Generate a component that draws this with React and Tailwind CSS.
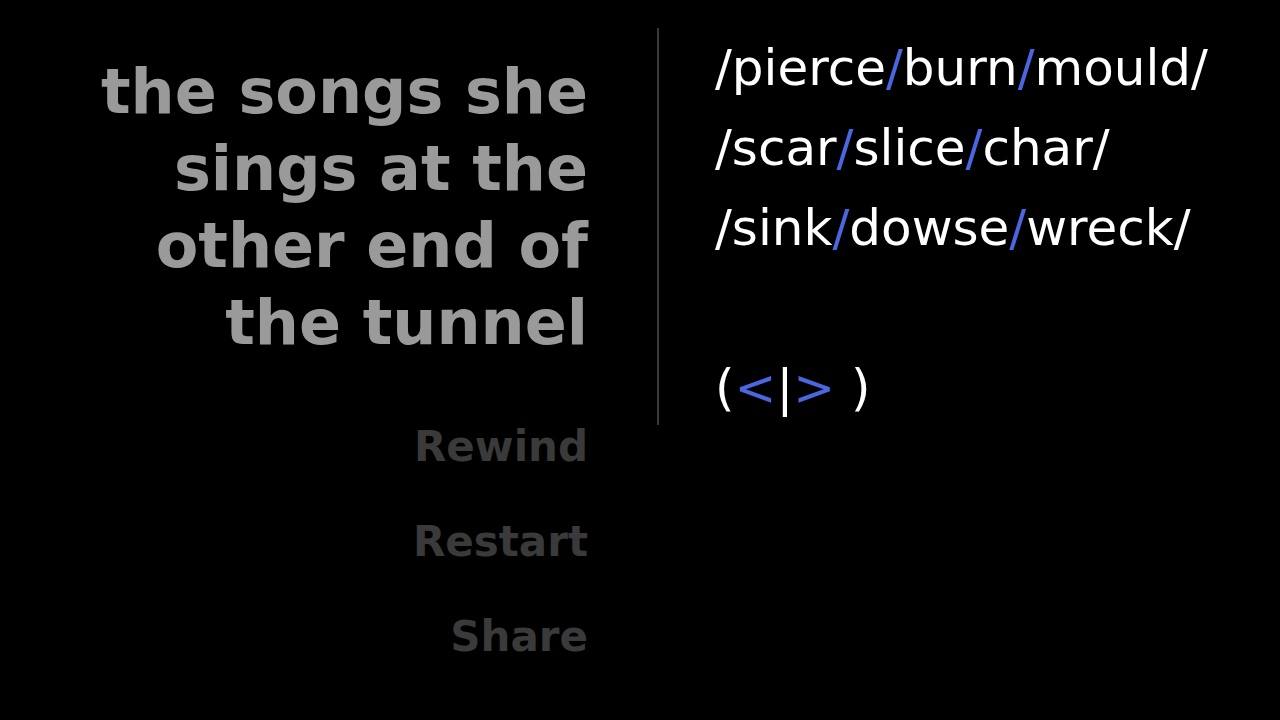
import React from "react";

const words = [
  ["pierce", "burn", "mould"],
  ["scar", "slice", "char"],
  ["sink", "dowse", "wreck"],
];

function Line({ items }) {
  return (
    <div className="h-[80px] leading-[80px]">
      /
      {items.map((w, i) => (
        <React.Fragment key={w}>
          {w}
          <span className={i === items.length - 1 ? "" : "text-[#4a66e0]"}>/</span>
        </React.Fragment>
      ))}
    </div>
  );
}

export default function App() {
  return (
    <div className="min-h-[720px] w-full bg-black overflow-hidden" style={{ fontFamily: '"DejaVu Sans", Verdana, sans-serif' }}>
      <div className="flex pt-[28px]">
        {/* left column: title and menu */}
        <div className="w-[657px] shrink-0 pr-[69px] text-right">
          <h1 className="ml-auto w-[505px] pt-[25px] text-[62px] leading-[77px] font-bold text-[#9a9a9a]">
            the songs she sings at the other end of the tunnel
          </h1>
          <div className="mt-[38px] flex flex-col text-[42px] font-bold text-[#3a3a3a] leading-[95px]">
            <span>Rewind</span>
            <span>Restart</span>
            <span>Share</span>
          </div>
        </div>

        {/* right column */}
        <div className="h-[397px] border-l-2 border-[#3a3a3a] pl-[56px] text-[50px] text-white">
          {words.map((w) => (
            <Line key={w[0]} items={w} />
          ))}
          <div className="mt-[80px] leading-[80px]">
            (<span className="text-[#4a66e0]">&lt;</span>|<span className="text-[#4a66e0]">&gt;</span> )
          </div>
        </div>
      </div>
    </div>
  );
}
